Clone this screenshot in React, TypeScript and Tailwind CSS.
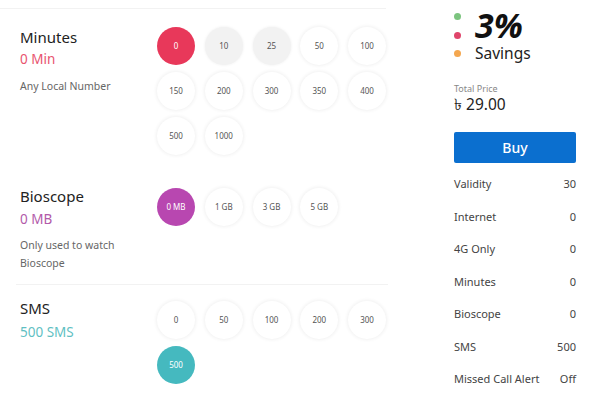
import { FC } from 'react';

type Tone = 'red' | 'purple' | 'teal';

interface Option {
  label: string;
  selected?: boolean;
  muted?: boolean;
}

const toneBg: Record<Tone, string> = {
  red: 'bg-[#e8385a] text-white',
  purple: 'bg-[#b847b0] text-white',
  teal: 'bg-[#45b9bf] text-white',
};

const Bubble: FC<{ option: Option; tone: Tone }> = ({ option, tone }) => {
  const cls = option.selected
    ? toneBg[tone]
    : option.muted
      ? 'bg-[#f2f2f2] text-[#555] shadow-[0_0_3px_rgba(0,0,0,0.08)]'
      : 'bg-white text-[#555] shadow-[0_0_4px_rgba(0,0,0,0.09)]';
  return (
    <div
      className={`flex h-[38px] w-[38px] items-center justify-center rounded-full text-[8px] ${cls}`}
    >
      {option.label}
    </div>
  );
};

const BubbleGrid: FC<{ options: Option[]; tone: Tone }> = ({ options, tone }) => (
  <div className="grid grid-cols-[repeat(5,38px)] gap-x-[9.75px] gap-y-[7px]">
    {options.map((o) => (
      <Bubble key={o.label} option={o} tone={tone} />
    ))}
  </div>
);

const minutes: Option[] = [
  { label: '0', selected: true },
  { label: '10', muted: true },
  { label: '25', muted: true },
  { label: '50' },
  { label: '100' },
  { label: '150' },
  { label: '200' },
  { label: '300' },
  { label: '350' },
  { label: '400' },
  { label: '500' },
  { label: '1000' },
];

const bioscope: Option[] = [
  { label: '0 MB', selected: true },
  { label: '1 GB' },
  { label: '3 GB' },
  { label: '5 GB' },
];

const sms: Option[] = [
  { label: '0' },
  { label: '50' },
  { label: '100' },
  { label: '200' },
  { label: '300' },
  { label: '500', selected: true },
];

const summary: [string, string][] = [
  ['Validity', '30'],
  ['Internet', '0'],
  ['4G Only', '0'],
  ['Minutes', '0'],
  ['Bioscope', '0'],
  ['SMS', '500'],
  ['Missed Call Alert', 'Off'],
];

export default function App() {
  return (
    <div className="flex h-[400px] w-[600px] overflow-hidden bg-white font-['Noto_Sans','DejaVu_Sans',sans-serif] text-[#222]">
      <div className="w-[454px] shrink-0">
        <div className="mt-2 h-px w-[386px] bg-[#f2f2f2]" />

        <section className="flex pl-5 pt-[18px]">
          <div className="w-[137px] shrink-0">
            <div className="text-[15px] leading-5">Minutes</div>
            <div className="mt-[2px] text-[13.5px] leading-5 text-[#e8536f]">0 Min</div>
            <div className="mt-2 text-[10.5px] leading-[18px] text-[#666]">Any Local Number</div>
          </div>
          <BubbleGrid options={minutes} tone="red" />
        </section>

        <section className="mt-[33px] flex pl-5">
          <div className="-mt-0.5 w-[137px] shrink-0">
            <div className="text-[15px] leading-5">Bioscope</div>
            <div className="mt-[3px] text-[13.5px] leading-5 text-[#b25aa9]">0 MB</div>
            <div className="mt-[7px] max-w-[112px] text-[10.5px] leading-[18px] text-[#666]">
              Only used to watch Bioscope
            </div>
          </div>
          <BubbleGrid options={bioscope} tone="purple" />
        </section>

        <div className="ml-4 mt-[12px] h-px w-[372px] bg-[#f2f2f2]" />

        <section className="flex pl-5 pt-4">
          <div className="-mt-[3px] w-[137px] shrink-0">
            <div className="text-[15px] leading-5">SMS</div>
            <div className="mt-1 text-[13.5px] leading-5 text-[#5fbfc3]">500 SMS</div>
          </div>
          <BubbleGrid options={sms} tone="teal" />
        </section>
      </div>

      <div className="w-[122px] shrink-0">
        <div className="mt-[6px] flex">
          <div className="flex flex-col gap-[11.5px] pt-[7px]">
            <span className="block h-[7px] w-[7px] rounded-full bg-[#7cc47f]" />
            <span className="block h-[7px] w-[7px] rounded-full bg-[#e0456b]" />
            <span className="block h-[7px] w-[7px] rounded-full bg-[#f4a74f]" />
          </div>
          <div className="ml-[14px]">
            <div className="text-[34px] font-bold italic leading-[38px] text-[#111]">3%</div>
            <div className="text-[15.5px] leading-[18px]">Savings</div>
          </div>
        </div>

        <div className="mt-[21px] text-[9px] leading-3 text-[#888]">Total Price</div>
        <div className="text-[15.5px] leading-[18px]">৳ 29.00</div>

        <button className="mt-[19px] flex h-[31px] w-full items-center justify-center rounded-[2px] bg-[#0b6fcf] text-[14px] font-medium text-white">
          Buy
        </button>

        <div className="mt-[5px]">
          {summary.map(([k, v]) => (
            <div key={k} className="flex h-[32.5px] items-center justify-between text-[11px] text-[#444]">
              <span>{k}</span>
              <span>{v}</span>
            </div>
          ))}
        </div>
      </div>
    </div>
  );
}
